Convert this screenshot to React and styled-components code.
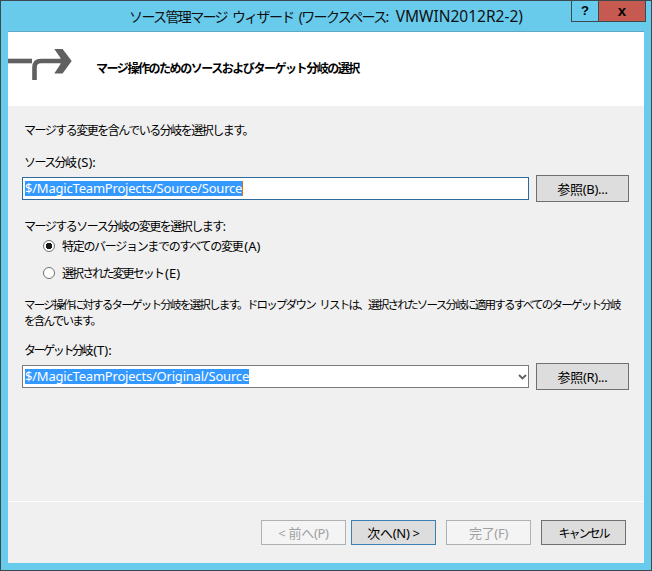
import React from "react";
import styled, { createGlobalStyle } from "styled-components";

const GlobalStyle = createGlobalStyle`
  html, body { margin: 0; padding: 0; background: #69cbec; }
  body { font-family: "Noto Sans", "Noto Sans CJK JP", sans-serif; font-size: 12px; color: #000; }
`;

const App = () => {
    return (
        <Window>
            <GlobalStyle />
            <TitleBar>
                <Title>ソース管理マージ ウィザード (ワークスペース: <MachineName>VMWIN2012R2-2)</MachineName></Title>
                <Controls>
                    <HelpButton>?</HelpButton>
                    <CloseButton>x</CloseButton>
                </Controls>
            </TitleBar>
            <Client>
                <Banner>
                    <BannerIcon width="66" height="32" viewBox="0 0 66 32">
                        <path d="M0 13H24" stroke="#606060" strokeWidth="4.6" fill="none" />
                        <path d="M26.5 32V19.5Q26.5 13 33 13H56" stroke="#606060" strokeWidth="4.6" fill="none" />
                        <path d="M46.3 1H54.6L63.7 13L54.6 25.5H46.3L52.5 16V10Z" fill="#606060" />
                    </BannerIcon>
                    <BannerText>マージ操作のためのソースおよびターゲット分岐の選択</BannerText>
                </Banner>
                <Body>
                    <Label $tight="-1.5px">マージする変更を含んでいる分岐を選択します。</Label>
                    <SourceLabel $tight="-1.6px">ソース分岐<Key>(S):</Key></SourceLabel>
                    <FieldRow>
                        <Field $focused>
                            <Selected $caret>$/MagicTeamProjects/Source/Source</Selected>
                        </Field>
                        <BrowseButton>参照(B)...</BrowseButton>
                    </FieldRow>
                    <VersionLabel $tight="-1.5px">マージするソース分岐の変更を選択します:</VersionLabel>
                    <RadioGroup>
                        <RadioRow>
                            <Radio $checked />
                            <RadioText $tight="-1.3px">特定のバージョンまでのすべての変更<Key>(A)</Key></RadioText>
                        </RadioRow>
                        <RadioRow>
                            <Radio />
                            <RadioText $tight="-1.9px">選択された変更セット<Key>(E)</Key></RadioText>
                        </RadioRow>
                    </RadioGroup>
                    <TargetHelp>
                        マージ操作に対するターゲット分岐を選択します。ドロップダウン リストは、選択されたソース分岐に適用するすべてのターゲット分岐<br />
                        を含んでいます。
                    </TargetHelp>
                    <TargetLabel $tight="-2.4px">ターゲット分岐<Key>(T):</Key></TargetLabel>
                    <FieldRow>
                        <Field>
                            <Selected>$/MagicTeamProjects/Original/Source</Selected>
                            <Chevron width="9" height="6" viewBox="0 0 9 6">
                                <path d="M1 1L4.5 4.5L8 1" stroke="#606060" strokeWidth="1.8" fill="none" />
                            </Chevron>
                        </Field>
                        <BrowseButton>参照(R)...</BrowseButton>
                    </FieldRow>
                </Body>
                <Footer>
                    <Button $disabled>&lt; 前へ(P)</Button>
                    <Button $default>次へ(N) &gt;</Button>
                    <FinishButton $disabled>完了(F)</FinishButton>
                    <CancelButton>キャンセル</CancelButton>
                </Footer>
            </Client>
        </Window>
    );
};

const Window = styled.div`
    width: 652px;
    height: 571px;
    box-sizing: border-box;
    display: flex;
    flex-direction: column;
    background: #69cbec;
    border: 1px solid #3c4a50;
    padding: 0 7px 7px;
    overflow: hidden;
`;
const TitleBar = styled.div`
    position: relative;
    height: 30px;
    flex: none;
    display: flex;
    justify-content: center;
    align-items: center;
    border-bottom: 1px solid #5fa9c6;
`;
const Title = styled.div`
    font-size: 14px;
    letter-spacing: -1.65px;
    word-spacing: 3px;
    color: #101010;
    white-space: nowrap;
`;
const MachineName = styled.span`
    font-size: 15.5px;
    letter-spacing: 0;
    margin-left: 3px;
`;
const Controls = styled.div`
    position: absolute;
    top: 0;
    right: -2px;
    display: flex;
`;
const HelpButton = styled.div`
    width: 28px;
    height: 21px;
    box-sizing: border-box;
    border: 1px solid #3c4a50;
    border-top: 0;
    display: flex;
    align-items: center;
    justify-content: center;
    font: bold 13px "Liberation Sans", sans-serif;
    padding-bottom: 2px;
`;
const CloseButton = styled(HelpButton)`
    width: 47px;
    border-left: 0;
    background: #c75a50;
    font-size: 15px;
`;
const Client = styled.div`
    flex: 1;
    display: flex;
    flex-direction: column;
    background: #f0f0f0;
    min-height: 0;
`;
const Banner = styled.div`
    height: 74px;
    flex: none;
    background: #fff;
    display: flex;
    align-items: flex-start;
`;
const BannerIcon = styled.svg`
    margin-top: 16px;
    flex: none;
`;
const BannerText = styled.div`
    margin: 28px 0 0 22px;
    font-size: 12px;
    font-weight: 700;
    letter-spacing: -1.45px;
    line-height: 18px;
`;
const Body = styled.div`
    flex: 1;
    padding: 16px 15px 0 14px;
    display: flex;
    flex-direction: column;
`;
const Label = styled.div`
    margin-left: 2px;
    line-height: 18px;
    font-size: 12px;
    letter-spacing: ${(props) => props.$tight || "0"};
    white-space: nowrap;
`;
const Key = styled.span`
    font-size: 13px;
    line-height: 1;
    letter-spacing: 0;
    margin-left: 2px;
`;
const SourceLabel = styled(Label)`
    margin-top: 14px;
`;
const VersionLabel = styled(Label)`
    margin-top: 16px;
`;
const TargetLabel = styled(Label)`
    margin-top: 13px;
`;
const TargetHelp = styled.div`
    margin: 15px 0 0 2px;
    line-height: 16px;
    font-size: 11.5px;
    letter-spacing: -1.75px;
    word-spacing: 3px;
    white-space: nowrap;
`;
const FieldRow = styled.div`
    display: flex;
    align-items: center;
    justify-content: space-between;
    margin-top: 3px;
`;
const Field = styled.div`
    width: 507px;
    height: 23px;
    box-sizing: border-box;
    background: #fff;
    border: 1px solid ${(props) => (props.$focused ? "#2d6a9a" : "#7a7a7a")};
    display: flex;
    align-items: center;
    justify-content: space-between;
    padding: 0 1px 0 2px;
`;
const Selected = styled.span`
    background: #3399ff;
    color: #fff;
    height: 15px;
    line-height: 15px;
    font-size: 13px;
    letter-spacing: -0.2px;
    white-space: nowrap;
    border-right: ${(props) => (props.$caret ? "1px solid #d07020" : "0")};
`;
const Chevron = styled.svg`
    flex: none;
`;
const RadioGroup = styled.div`
    margin: 1px 0 0 21px;
    display: flex;
    flex-direction: column;
    gap: 9px;
`;
const RadioRow = styled.div`
    display: flex;
    align-items: center;
    gap: 7px;
    height: 18px;
    font-size: 12px;
    white-space: nowrap;
`;
const RadioText = styled.span`
    letter-spacing: ${(props) => props.$tight};
`;
const Radio = styled.span`
    width: 12px;
    height: 12px;
    flex: none;
    box-sizing: border-box;
    border: 1px solid #707070;
    border-radius: 50%;
    background: ${(props) => (props.$checked ? "radial-gradient(circle, #1a1a1a 0 3px, #fff 3.5px)" : "#fff")};
`;
const Footer = styled.div`
    height: 62px;
    flex: none;
    box-sizing: border-box;
    border-top: 1px solid #fff;
    display: flex;
    align-items: flex-start;
    padding: 18px 18px 0 253px;
    gap: 5px;
`;
const Button = styled.div`
    width: 85px;
    height: 25px;
    box-sizing: border-box;
    flex: none;
    display: flex;
    align-items: center;
    justify-content: center;
    font-size: 13px;
    letter-spacing: -0.3px;
    white-space: nowrap;
    color: ${(props) => (props.$disabled ? "#a0a0a0" : "#000")};
    background: ${(props) => (props.$disabled ? "#f4f4f4" : "#dddddd")};
    border: 1px solid ${(props) => (props.$disabled ? "#adb2b5" : props.$default ? "#3c7fb1" : "#707070")};
`;
const BrowseButton = styled(Button)`
    width: 93px;
    height: 27px;
`;
const FinishButton = styled(Button)`
    margin-left: 5px;
`;
const CancelButton = styled(Button)`
    margin-left: 5px;
    font-size: 12px;
    letter-spacing: -2px;
`;

export default App;
